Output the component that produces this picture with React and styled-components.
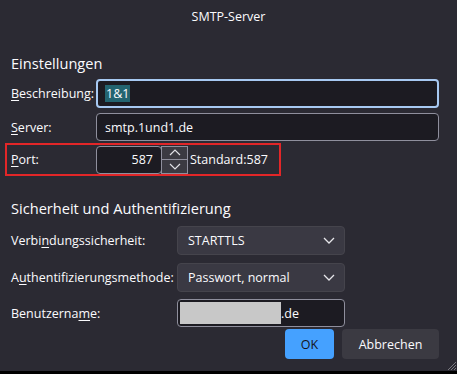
import React from "react"
import styled, { createGlobalStyle } from "styled-components"

const Global = createGlobalStyle`
  html, body {
    margin: 0;
    padding: 0;
    background: #000;
  }
  body {
    font-family: "Open Sans", "Noto Sans", sans-serif;
    color: #fbfbfe;
  }
`

const Dialog = styled.div`
  width: 457px;
  height: 371px;
  background: #2b2a33;
  position: relative;
  display: flex;
  flex-direction: column;
  overflow: hidden;
`

const Title = styled.div`
  height: 32px;
  display: flex;
  align-items: center;
  justify-content: center;
  font-size: 12.5px;
  color: #fbfbfe;
`

const Body = styled.div`
  padding: 0 18px 0 11px;
  display: flex;
  flex-direction: column;
`

const Heading = styled.div`
  font-size: 14.6px;
  margin-top: ${p => p.top}px;
  height: ${p => p.h}px;
  line-height: 20px;
`

const Row = styled.div`
  display: flex;
  align-items: center;
  height: ${p => p.h || 29}px;
  margin-top: ${p => p.top || 0}px;
`

const Label = styled.label`
  width: ${p => p.w}px;
  flex-shrink: 0;
  font-size: 12.5px;
  color: #fbfbfe;
  u {
    text-decoration-thickness: 1px;
    text-underline-offset: 2px;
  }
`

const TextInput = styled.div`
  box-sizing: border-box;
  height: ${p => p.h || 29}px;
  width: ${p => p.w ? p.w + "px" : "auto"};
  flex: ${p => (p.w ? "none" : 1)};
  background: #1c1b22;
  border: ${p => (p.focused ? "2px solid #a7c9f2" : "1px solid #8f8f9d")};
  border-radius: 4px;
  display: flex;
  align-items: center;
  justify-content: ${p => (p.right ? "flex-end" : "flex-start")};
  padding: ${p => (p.focused ? "0 7px" : "0 8px")};
  font-size: 12.5px;
`

const Selected = styled.span`
  background: #236470;
  color: #fbfbfe;
  padding: 0 1px;
`

const Highlight = styled.div`
  margin-left: -6px;
  margin-right: 158px;
  border: 2px solid #e22628;
  height: 33px;
  box-sizing: border-box;
  display: flex;
  align-items: center;
  padding-left: 4px;
  margin-top: 2px;
`

const Spin = styled.div`
  width: 27px;
  height: 28px;
  box-sizing: border-box;
  border: 1px solid #8f8f9d;
  background: #3b3a42;
  display: flex;
  flex-direction: column;
  margin-left: -1px;
`

const SpinBtn = styled.div`
  flex: 1;
  display: flex;
  align-items: center;
  justify-content: center;
  & + & {
    border-top: 1px solid #8f8f9d;
  }
`

const Hint = styled.span`
  font-size: 12.5px;
  margin-left: 2px;
`

const Select = styled.div`
  box-sizing: border-box;
  width: 168px;
  height: 29px;
  background: #3a3943;
  border: 1px solid #45444c;
  border-radius: 4px;
  display: flex;
  align-items: center;
  justify-content: space-between;
  padding: 0 9px 0 10px;
  font-size: 12.5px;
`

const Blur = styled.span`
  display: inline-block;
  width: 101px;
  height: 22px;
  background: #c8c8c8;
  margin-left: -6px;
`

const Buttons = styled.div`
  display: flex;
  justify-content: flex-end;
  gap: 8px;
  margin-top: 2px;
`

const Button = styled.div`
  height: 30px;
  border-radius: 4px;
  display: flex;
  align-items: center;
  justify-content: center;
  font-size: 12.5px;
  width: ${p => p.w}px;
  background: ${p => (p.primary ? "#45a1ff" : "#3b3a42")};
  color: ${p => (p.primary ? "#15141a" : "#fbfbfe")};
`

const Grip = styled.svg`
  position: absolute;
  right: 0;
  bottom: 0;
`

const Chevron = ({ up }) => (
  <svg width="12" height="7" viewBox="0 0 12 7">
    <path
      d={up ? "M1 6 L6 1 L11 6" : "M1 1 L6 6 L11 1"}
      fill="none"
      stroke="#e0e0e6"
      strokeWidth="1.2"
    />
  </svg>
)

const Caret = () => (
  <svg width="12" height="7" viewBox="0 0 12 7">
    <path d="M1 1 L6 6 L11 1" fill="none" stroke="#e6e6ea" strokeWidth="1.3" />
  </svg>
)

export default function App() {
  return (
    <>
      <Global />
      <Dialog>
        <Title>SMTP-Server</Title>
        <Body>
          <Heading top={21} h={26}>Einstellungen</Heading>
          <Row>
            <Label w={85}><u>B</u>eschreibung:</Label>
            <TextInput focused>
              <Selected>1&amp;1</Selected>
            </TextInput>
          </Row>
          <Row top={5} h={28}>
            <Label w={85}><u>S</u>erver:</Label>
            <TextInput h={28}>smtp.1und1.de</TextInput>
          </Row>
          <Highlight>
            <Label w={85}><u>P</u>ort:</Label>
            <TextInput w={66} h={28} right>587</TextInput>
            <Spin>
              <SpinBtn><Chevron up /></SpinBtn>
              <SpinBtn><Chevron /></SpinBtn>
            </Spin>
            <Hint>Standard:587</Hint>
          </Highlight>
          <Heading top={22} h={26}>Sicherheit und Authentifizierung</Heading>
          <Row top={2}>
            <Label w={166}>Verbi<u>n</u>dungssicherheit:</Label>
            <Select>STARTTLS<Caret /></Select>
          </Row>
          <Row top={8}>
            <Label w={166}>A<u>u</u>thentifizierungsmethode:</Label>
            <Select>Passwort, normal<Caret /></Select>
          </Row>
          <Row top={7} h={28}>
            <Label w={166}>Benutzerna<u>m</u>e:</Label>
            <TextInput w={168} h={28}>
              <Blur />.de
            </TextInput>
          </Row>
          <Buttons>
            <Button primary w={49}>OK</Button>
            <Button w={97}>Abbrechen</Button>
          </Buttons>
        </Body>
        <Grip width="12" height="12" viewBox="0 0 12 12">
          <path d="M11 3 L3 11 M11 6 L6 11 M11 9 L9 11" stroke="#7a7980" strokeWidth="1" />
        </Grip>
      </Dialog>
    </>
  )
}
